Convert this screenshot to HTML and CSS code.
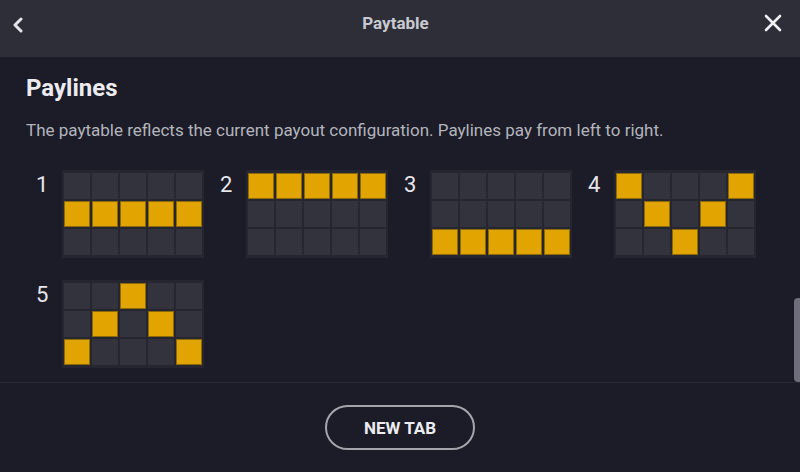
FILE: index.html
```html
<!DOCTYPE html>
<html lang="en">
<head>
  <meta charset="UTF-8">
  <meta name="viewport" content="width=device-width, initial-scale=1.0">
  <title>Paytable</title>
  <link rel="stylesheet" href="styles.css">
</head>
<body>
  <div id="paytable">
    <div id="pt-header">
      <button class="icon-btn" aria-label="Back">
        <svg width="14" height="16" viewBox="0 0 14 16"><path d="M10 2 L4 8 L10 14" fill="none" stroke="#e4e4ea" stroke-width="3" stroke-linecap="round" stroke-linejoin="round"/></svg>
      </button>
      <div class="pt-title">Paytable</div>
      <button class="icon-btn" aria-label="Close">
        <svg width="20" height="20" viewBox="0 0 20 20"><path d="M3 3 L17 17 M17 3 L3 17" fill="none" stroke="#f0f0f4" stroke-width="2.6" stroke-linecap="round"/></svg>
      </button>
    </div>

    <div id="pt-content">
      <h2>Paylines</h2>
      <p class="pt-desc">The paytable reflects the current payout configuration. Paylines pay from left to right.</p>
      <div id="lines" class="lines"></div>
      <div class="scroll-thumb"></div>
    </div>

    <div id="pt-footer">
      <button class="pill-btn">NEW TAB</button>
    </div>
  </div>

  <script>
    // row index (0 = top) for each of the 5 reels
    const paylines = [
      [1, 1, 1, 1, 1],
      [0, 0, 0, 0, 0],
      [2, 2, 2, 2, 2],
      [0, 1, 2, 1, 0],
      [2, 1, 0, 1, 2]
    ];

    const linesDiv = document.getElementById('lines');

    paylines.forEach((line, i) => {
      let cells = '';
      for (let row = 0; row < 3; row++) {
        for (let col = 0; col < 5; col++) {
          cells += `<div class="cell${line[col] === row ? ' on' : ''}"></div>`;
        }
      }
      linesDiv.innerHTML += `
        <div class="line">
          <span class="line-num">${i + 1}</span>
          <div class="grid">${cells}</div>
        </div>`;
    });
  </script>
</body>
</html>
```

FILE: styles.css
```css
* {
  box-sizing: border-box;
}

body {
  margin: 0;
  font-family: Roboto, "Liberation Sans", sans-serif;
  background-color: #1b1c27;
}

#paytable {
  width: 800px;
  height: 472px;
  display: flex;
  flex-direction: column;
  overflow: hidden;
}

#pt-header {
  height: 57px;
  flex: none;
  background-color: #2e2e39;
  display: flex;
  align-items: center;
  justify-content: space-between;
  padding: 0 15px 12px 6px;
}

.icon-btn {
  background: none;
  border: none;
  padding: 0;
  width: 24px;
  height: 24px;
  display: flex;
  align-items: center;
  justify-content: center;
}

.icon-btn:first-child {
  margin-top: 5px;
}

.pt-title {
  color: #c9c9d1;
  font-size: 17px;
  font-weight: 700;
}

#pt-content {
  flex: 1;
  position: relative;
  padding: 16px 26px 0 26px;
  border-bottom: 1px solid #262733;
}

#pt-content h2 {
  margin: 0;
  color: #ebebf0;
  font-size: 24px;
  font-weight: 700;
  line-height: 30px;
}

.pt-desc {
  margin: 16px 0 0 0;
  color: #b4b4bd;
  font-size: 17px;
  line-height: 22px;
}

.lines {
  display: flex;
  flex-wrap: wrap;
  column-gap: 16px;
  row-gap: 22px;
  margin-top: 29px;
  padding-left: 10px;
}

.line {
  display: flex;
  align-items: flex-start;
  gap: 13px;
}

.line-num {
  color: #e6e6ec;
  font-size: 22px;
  line-height: 28px;
  padding-top: 1px;
  width: 13px;
}

.grid {
  display: grid;
  grid-template-columns: repeat(5, 26px);
  grid-template-rows: repeat(3, 26px);
  gap: 2px;
  padding: 3px 2px;
  background-color: #262630;
}

.cell {
  background-color: #33333d;
}

.cell.on {
  background-color: #e1a400;
  box-shadow: inset 0 0 0 1px #8c6a08;
}

.scroll-thumb {
  position: absolute;
  right: 0;
  bottom: 0;
  width: 6px;
  height: 84px;
  background-color: #6d6d7b;
  border-radius: 4px 0 0 4px;
}

#pt-footer {
  height: 89px;
  flex: none;
  display: flex;
  align-items: center;
  justify-content: center;
}

.pill-btn {
  width: 150px;
  height: 45px;
  border: 2px solid #a4a4ac;
  border-radius: 23px;
  background: none;
  color: #ececf1;
  font-family: Roboto, "Liberation Sans", sans-serif;
  font-size: 17px;
  font-weight: 700;
}
```
